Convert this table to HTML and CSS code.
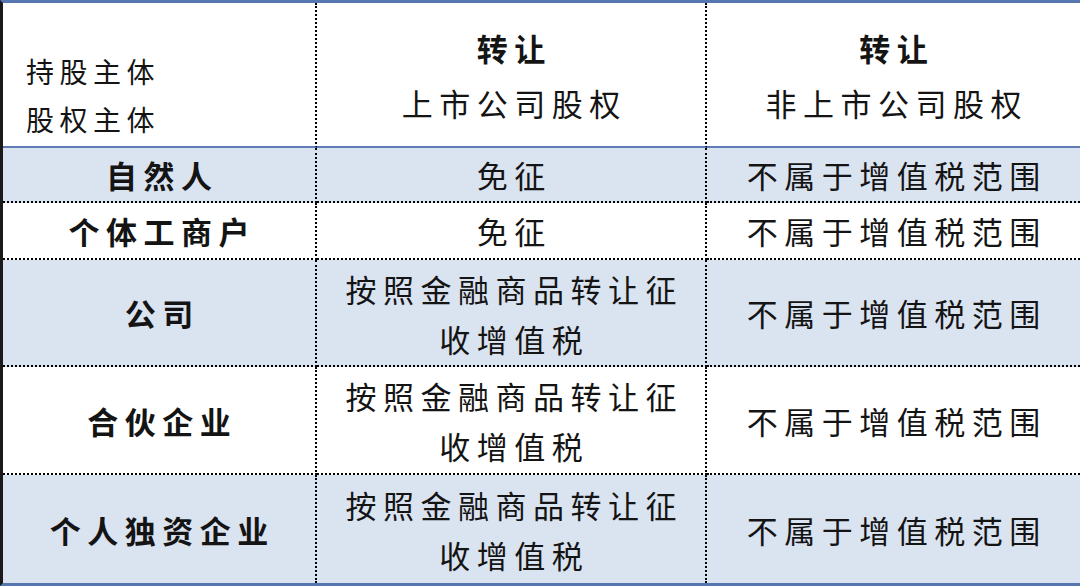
FILE: index.html
```html
<!DOCTYPE html>
<html lang="zh-CN">
<head>
<meta charset="utf-8">
<link rel="stylesheet" href="styles.css">
</head>
<body>
<div class="table">
  <div class="cell head first"><div class="corner"><div>持股主体</div><div>股权主体</div></div></div>
  <div class="cell head mid"><div class="htext"><div class="strong">转让</div><div>上市公司股权</div></div></div>
  <div class="cell head last"><div class="htext"><div class="strong">转让</div><div>非上市公司股权</div></div></div>

  <div class="cell blue label">自然人</div>
  <div class="cell blue mid">免征</div>
  <div class="cell blue last">不属于增值税范围</div>

  <div class="cell label">个体工商户</div>
  <div class="cell mid">免征</div>
  <div class="cell last">不属于增值税范围</div>

  <div class="cell blue label">公司</div>
  <div class="cell blue mid two"><div>按照金融商品转让征</div><div>收增值税</div></div>
  <div class="cell blue last">不属于增值税范围</div>

  <div class="cell label">合伙企业</div>
  <div class="cell mid two"><div>按照金融商品转让征</div><div>收增值税</div></div>
  <div class="cell last">不属于增值税范围</div>

  <div class="cell blue label end">个人独资企业</div>
  <div class="cell blue mid two end"><div>按照金融商品转让征</div><div>收增值税</div></div>
  <div class="cell blue last end">不属于增值税范围</div>
</div>
</body>
</html>
```

FILE: styles.css
```css
html, body {
  margin: 0;
  padding: 0;
  background: #ffffff;
}
body {
  width: 1080px;
  height: 586px;
  overflow: hidden;
  font-family: "Noto Sans CJK SC", "Noto Sans", sans-serif;
  color: #141414;
}
.table {
  box-sizing: border-box;
  width: 1080px;
  height: 586px;
  border-top: 3px solid #5676b0;
  border-bottom: 3px solid #5676b0;
  border-left: 3px solid #1a1a1a;
  display: grid;
  grid-template-columns: 314px 390px 1fr;
  grid-template-rows: 145px 55px 57px 107px 108px 108px;
}
.cell {
  box-sizing: border-box;
  display: flex;
  align-items: center;
  justify-content: center;
  text-align: center;
  font-size: 31px;
  letter-spacing: 6.5px;
  padding-left: 6.5px;
  border-bottom: 2px dotted #000000;
  background: #ffffff;
}
.cell.blue {
  background: #dae3f0;
}
.cell.first, .cell.mid, .cell.label {
  border-right: 2px dotted #000000;
}
.cell.head {
  border-bottom: 2px solid #5f7cb8;
}
.cell.end {
  border-bottom: none;
}
.cell.first {
  justify-content: flex-start;
  align-items: flex-end;
  padding-left: 23px;
  padding-bottom: 3px;
}
.corner {
  text-align: left;
  font-size: 28px;
  letter-spacing: 5.5px;
  line-height: 48px;
}
.htext {
  line-height: 55px;
  font-weight: 400;
}
.htext .strong {
  font-weight: 700;
}
.label {
  font-weight: 700;
}
.two {
  flex-direction: column;
  line-height: 50px;
  padding-top: 2px;
}
```
